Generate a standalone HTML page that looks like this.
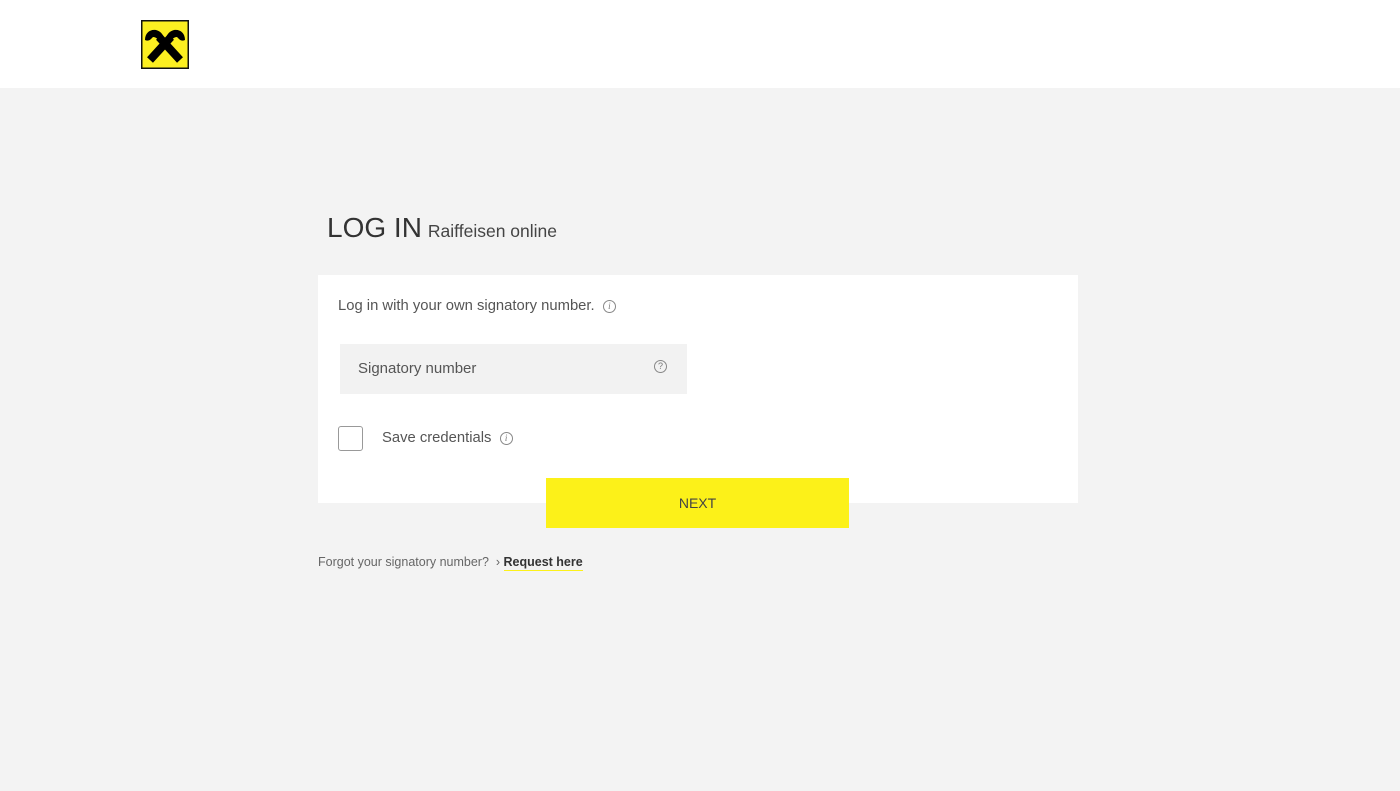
<!DOCTYPE html>
<html><head><meta charset="utf-8"><style>
*{margin:0;padding:0;box-sizing:border-box}
body{width:1400px;height:791px;background:#f3f3f3;font-family:"Liberation Sans",sans-serif;color:#4a4a4a;position:relative;overflow:hidden}
.hdr{position:absolute;left:0;top:0;width:1400px;height:88px;background:#fff}
.logo{position:absolute;left:141px;top:20px;width:48px;height:49px}
h1{position:absolute;left:327px;top:212px;font-weight:normal;font-size:28px;color:#333}
h1 span{font-size:17.5px;color:#444;margin-left:6px}
.card{position:absolute;left:318px;top:275px;width:760px;height:228px;background:#fff}
.t1{position:absolute;left:338px;top:298px;font-size:14.8px;color:#555}
.ic{display:inline-block;width:13px;height:13px;border:1px solid #888;border-radius:50%;font-size:9px;line-height:11px;text-align:center;color:#777;font-style:italic;font-family:"Liberation Serif",serif;vertical-align:middle}
.inp{position:absolute;left:340px;top:344px;width:347px;height:50px;background:#f2f2f2}
.inp .l{position:absolute;left:18px;top:16px;font-size:15px;color:#555}
.inp .ic{position:absolute;left:314px;top:16px;font-style:normal;font-family:"Liberation Sans";font-size:9px}
.cb{position:absolute;left:338px;top:426px;width:25px;height:25px;border:1px solid #999;border-radius:3px;background:#fff}
.sc{position:absolute;left:382px;top:430px;font-size:14.8px;color:#555}
.btn{position:absolute;left:546px;top:478px;width:303px;height:50px;background:#fcf119;text-align:center;line-height:50px;font-size:14px;color:#444}
.fg{position:absolute;left:318px;top:555px;font-size:12.5px;color:#666}
.fg b{font-weight:bold;color:#333;border-bottom:1.5px solid #fcf119;padding-bottom:1px}
</style></head><body>
<div class="hdr"></div>
<svg class="logo" viewBox="0 0 48 49">
<rect x="0.75" y="0.75" width="46.5" height="47.5" fill="#fcef21" stroke="#111" stroke-width="1.5"/>
<path d="M9 40 L30 17 M39 40 L18 17" stroke="#000" stroke-width="8" fill="none"/>
<path d="M4 20 C4 13 9 9 15 10 C19 11 22 14 23 18 L19 23 C17 19 15 17 12 17 L10 19 C8 21 6 21 4 20Z" fill="#000"/>
<path d="M44 20 C44 13 39 9 33 10 C29 11 26 14 25 18 L29 23 C31 19 33 17 36 17 L38 19 C40 21 42 21 44 20Z" fill="#000"/>
</svg>
<h1>LOG IN<span>Raiffeisen online</span></h1>
<div class="card"></div>
<div class="t1">Log in with your own signatory number. &nbsp;<span class="ic">i</span></div>
<div class="inp"><span class="l">Signatory number</span><span class="ic">?</span></div>
<div class="cb"></div>
<div class="sc">Save credentials &nbsp;<span class="ic">i</span></div>
<div class="btn">NEXT</div>
<div class="fg">Forgot your signatory number? &nbsp;› <b>Request here</b></div>
</body></html>
